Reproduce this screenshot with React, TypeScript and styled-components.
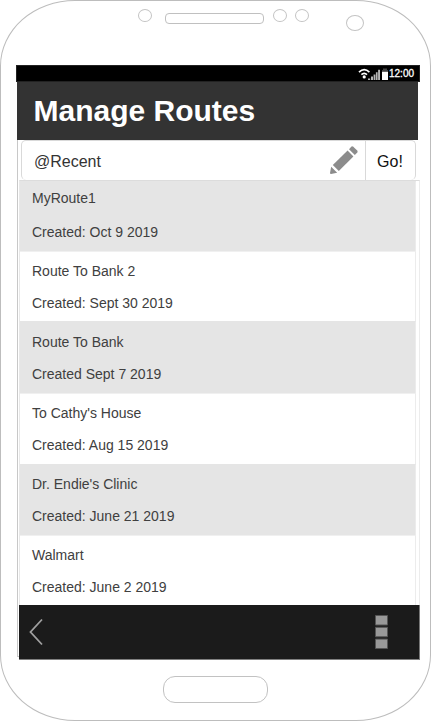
import React from "react";
import styled, { createGlobalStyle } from "styled-components";

const GlobalStyle = createGlobalStyle`
  *, *::before, *::after { box-sizing: border-box; }
  body {
    margin: 0;
    background: #fff;
    font-family: "Liberation Sans", Arial, sans-serif;
    overflow: hidden;
  }
`;

const Phone = styled.main`
  display: flex;
  flex-direction: column;
  width: 431px;
  height: 721px;
  border: 1px solid #bdbdbd;
  border-radius: 75px / 66px;
  background: #fff;
`;

const TopBezel = styled.div`
  display: flex;
  align-items: flex-start;
  flex: none;
  height: 64px;
`;

const Sensor = styled.span<{ $w: number; $h: number; $left: number; $top: number }>`
  flex: none;
  width: ${(p) => p.$w}px;
  height: ${(p) => p.$h}px;
  margin: ${(p) => p.$top}px 0 0 ${(p) => p.$left}px;
  border: 1px solid #c4c4c4;
  border-radius: 50%;
`;

const Speaker = styled.span`
  flex: none;
  width: 99px;
  height: 11px;
  margin: 12px 0 0 13px;
  border: 1px solid #c0c0c0;
  border-radius: 4px;
`;

const StatusBar = styled.div`
  display: flex;
  justify-content: flex-end;
  align-items: center;
  flex: none;
  width: 404px;
  height: 17px;
  margin-left: 15px;
  padding-right: 5px;
  background: #000;
  border: 1px solid #222;
  color: #fff;
  font-size: 10px;
  line-height: 15px;
`;

const StatusIcons = styled.svg`
  display: block;
  width: 31px;
  height: 15px;
`;

const Clock = styled.time`
  width: 25px;
  white-space: nowrap;
  -webkit-text-stroke: 0.3px #fff;
`;

const Header = styled.header`
  flex: none;
  width: 401px;
  height: 58px;
  margin-left: 16px;
  padding-left: 16.5px;
  background: #333;
`;

const Title = styled.h1`
  margin: 0;
  color: #fff;
  font-size: 30px;
  font-weight: 700;
  line-height: 57px;
`;

const Content = styled.div`
  display: flex;
  flex-direction: column;
  flex: none;
  width: 401px;
  height: 517px;
  margin: 0 0 0 16px;
  border-left: 1px solid #c8c8c8;
  border-bottom: 1px solid #c8c8c8;
`;

const SearchBar = styled.div`
  display: flex;
  flex: none;
  width: 395px;
  height: 40px;
  margin-left: 3px;
  border: 1px solid #d9d9d9;
  border-bottom: 0;
  border-radius: 5px;
  background: #fff;
`;

const SearchField = styled.div`
  display: flex;
  justify-content: space-between;
  flex: none;
  width: 344px;
  padding-left: 12px;
  padding-right: 7px;
  border-right: 1px solid #d9d9d9;
  color: #333;
  font-size: 16px;
  line-height: 41px;
`;

const PencilIcon = styled.svg`
  display: block;
  width: 28px;
  height: 28px;
  margin-top: 5px;
`;

const GoButton = styled.button`
  flex: 1;
  padding: 2px 1px 0 0;
  border: 0;
  background: none;
  color: #111;
  font: 16px/37px "Liberation Sans", Arial, sans-serif;
`;

const RouteList = styled.ul`
  flex: none;
  width: 401px;
  height: 425px;
  margin: 0 0 0 1px;
  padding: 0 3px 0 0;
  border-top: 1px solid #dcdcdc;
  border-left: 1px solid #e8e8e8;
  border-right: 1px solid #ececec;
  list-style: none;
`;

const RouteRow = styled.li<{ $shaded: boolean; $height: number; $top: number; $gap: number }>`
  height: ${(p) => p.$height}px;
  padding: ${(p) => p.$top}px 0 0 12px;
  border-top: 1px solid ${(p) => (p.$shaded ? "#e5e5e5" : "#f0f0f0")};
  border-right: 1px solid #ececec;
  background: ${(p) => (p.$shaded ? "#e5e5e5" : "#fff")};
  color: #404040;
  font-size: 14px;
  line-height: 18px;

  & > div + div {
    margin-top: ${(p) => p.$gap}px;
  }
`;

const Footer = styled.footer`
  display: flex;
  justify-content: space-between;
  flex: none;
  width: 401px;
  height: 55px;
  margin-left: 1px;
  padding: 0 31px 0 10px;
  background: #1b1b1b;
  border-right: 1px solid #777;
  border-bottom: 1px solid #808080;
`;

const IconButton = styled.button`
  padding: 0;
  border: 0;
  background: none;
  & svg { display: block; }
`;

const HomeButton = styled.div`
  flex: none;
  width: 105px;
  height: 27px;
  margin: 19px 0 0 162px;
  border: 1px solid #c2c2c2;
  border-radius: 12px;
`;

const routes = [
  { name: "MyRoute1", date: "Created: Oct 9 2019", height: 70, top: 7, gap: 16 },
  { name: "Route To Bank 2", date: "Created: Sept 30 2019", height: 70, top: 10, gap: 14 },
  { name: "Route To Bank", date: "Created Sept 7 2019", height: 72, top: 11, gap: 14 },
  { name: "To Cathy's House", date: "Created: Aug 15 2019", height: 71, top: 10, gap: 14 },
  { name: "Dr. Endie's Clinic", date: "Created: June 21 2019", height: 71, top: 10, gap: 14 },
  { name: "Walmart", date: "Created: June 2 2019", height: 70, top: 10, gap: 14 },
];

export default function App() {
  return (
    <>
      <GlobalStyle />
      <Phone>
        <TopBezel>
          <Sensor $w={14} $h={13} $left={137} $top={8} />
          <Speaker />
          <Sensor $w={14} $h={13} $left={9} $top={8} />
          <Sensor $w={14} $h={13} $left={8} $top={8} />
          <Sensor $w={18} $h={16} $left={37} $top={14} />
        </TopBezel>
        <StatusBar>
          <StatusIcons viewBox="0 0 31 15" aria-label="Wi-Fi, signal and battery">
            <g fill="none" stroke="#fff" strokeWidth="1.7">
              <path d="M1 6.1Q6.2 1.1 11.4 6.1" />
              <path d="M3.4 8.6Q6.2 6 9 8.6" />
            </g>
            <circle cx="6.2" cy="10.9" r="1.6" fill="#fff" />
            <path d="M10 12.5h2.2V14H10zM13 10.5h2V14h-2zM15.6 8.5h1.8V14h-1.8zM17.9 6.2h1.7V14h-1.7zM20.1 3.8H22V14h-1.9z" fill="#b5b5b5" />
            <path d="M25 2.5h4V4h1v2h-6V4h1z" fill="#444" />
            <path d="M24 5.8h6V14h-6z" fill="#fff" />
          </StatusIcons>
          <Clock>12:00</Clock>
        </StatusBar>
        <Header>
          <Title>Manage Routes</Title>
        </Header>
        <Content>
          <SearchBar>
            <SearchField>
              <span>@Recent</span>
              <PencilIcon viewBox="0 0 28 28" fill="#8c8c8c" aria-label="Edit">
                <path d="M1.2 20.8 7.2 26.8 1 28Q0 28 0 27z" />
                <path d="M2.8 19 17.6 4.6 23.4 10.4 8.8 25z" />
                <path d="M19 3.2 21.5.6Q22.4 0 23.3.8L27.2 4.6Q28 5.5 27.3 6.4L24.8 9z" />
              </PencilIcon>
            </SearchField>
            <GoButton>Go!</GoButton>
          </SearchBar>
          <RouteList>
            {routes.map((route, index) => (
              <RouteRow
                key={route.name}
                $shaded={index % 2 === 0}
                $height={route.height}
                $top={route.top}
                $gap={route.gap}
              >
                <div>{route.name}</div>
                <div>{route.date}</div>
              </RouteRow>
            ))}
          </RouteList>
          <Footer>
            <IconButton aria-label="Back">
              <svg width="14" height="28" viewBox="0 0 14 28">
                <path d="M13 1.5 1.5 14 13 26.5" fill="none" stroke="#a0a0a0" strokeWidth="1.8" />
              </svg>
            </IconButton>
            <IconButton aria-label="More options">
              <svg width="13" height="34" viewBox="0 0 13 34">
                <g fill="#999" stroke="#555" strokeWidth="1">
                  <path d="M.5.5h12v9.5H.5zM.5 12.3h12v9.5H.5zM.5 24.1h12v9.4H.5z" />
                </g>
              </svg>
            </IconButton>
          </Footer>
        </Content>
        <HomeButton />
      </Phone>
    </>
  );
}
